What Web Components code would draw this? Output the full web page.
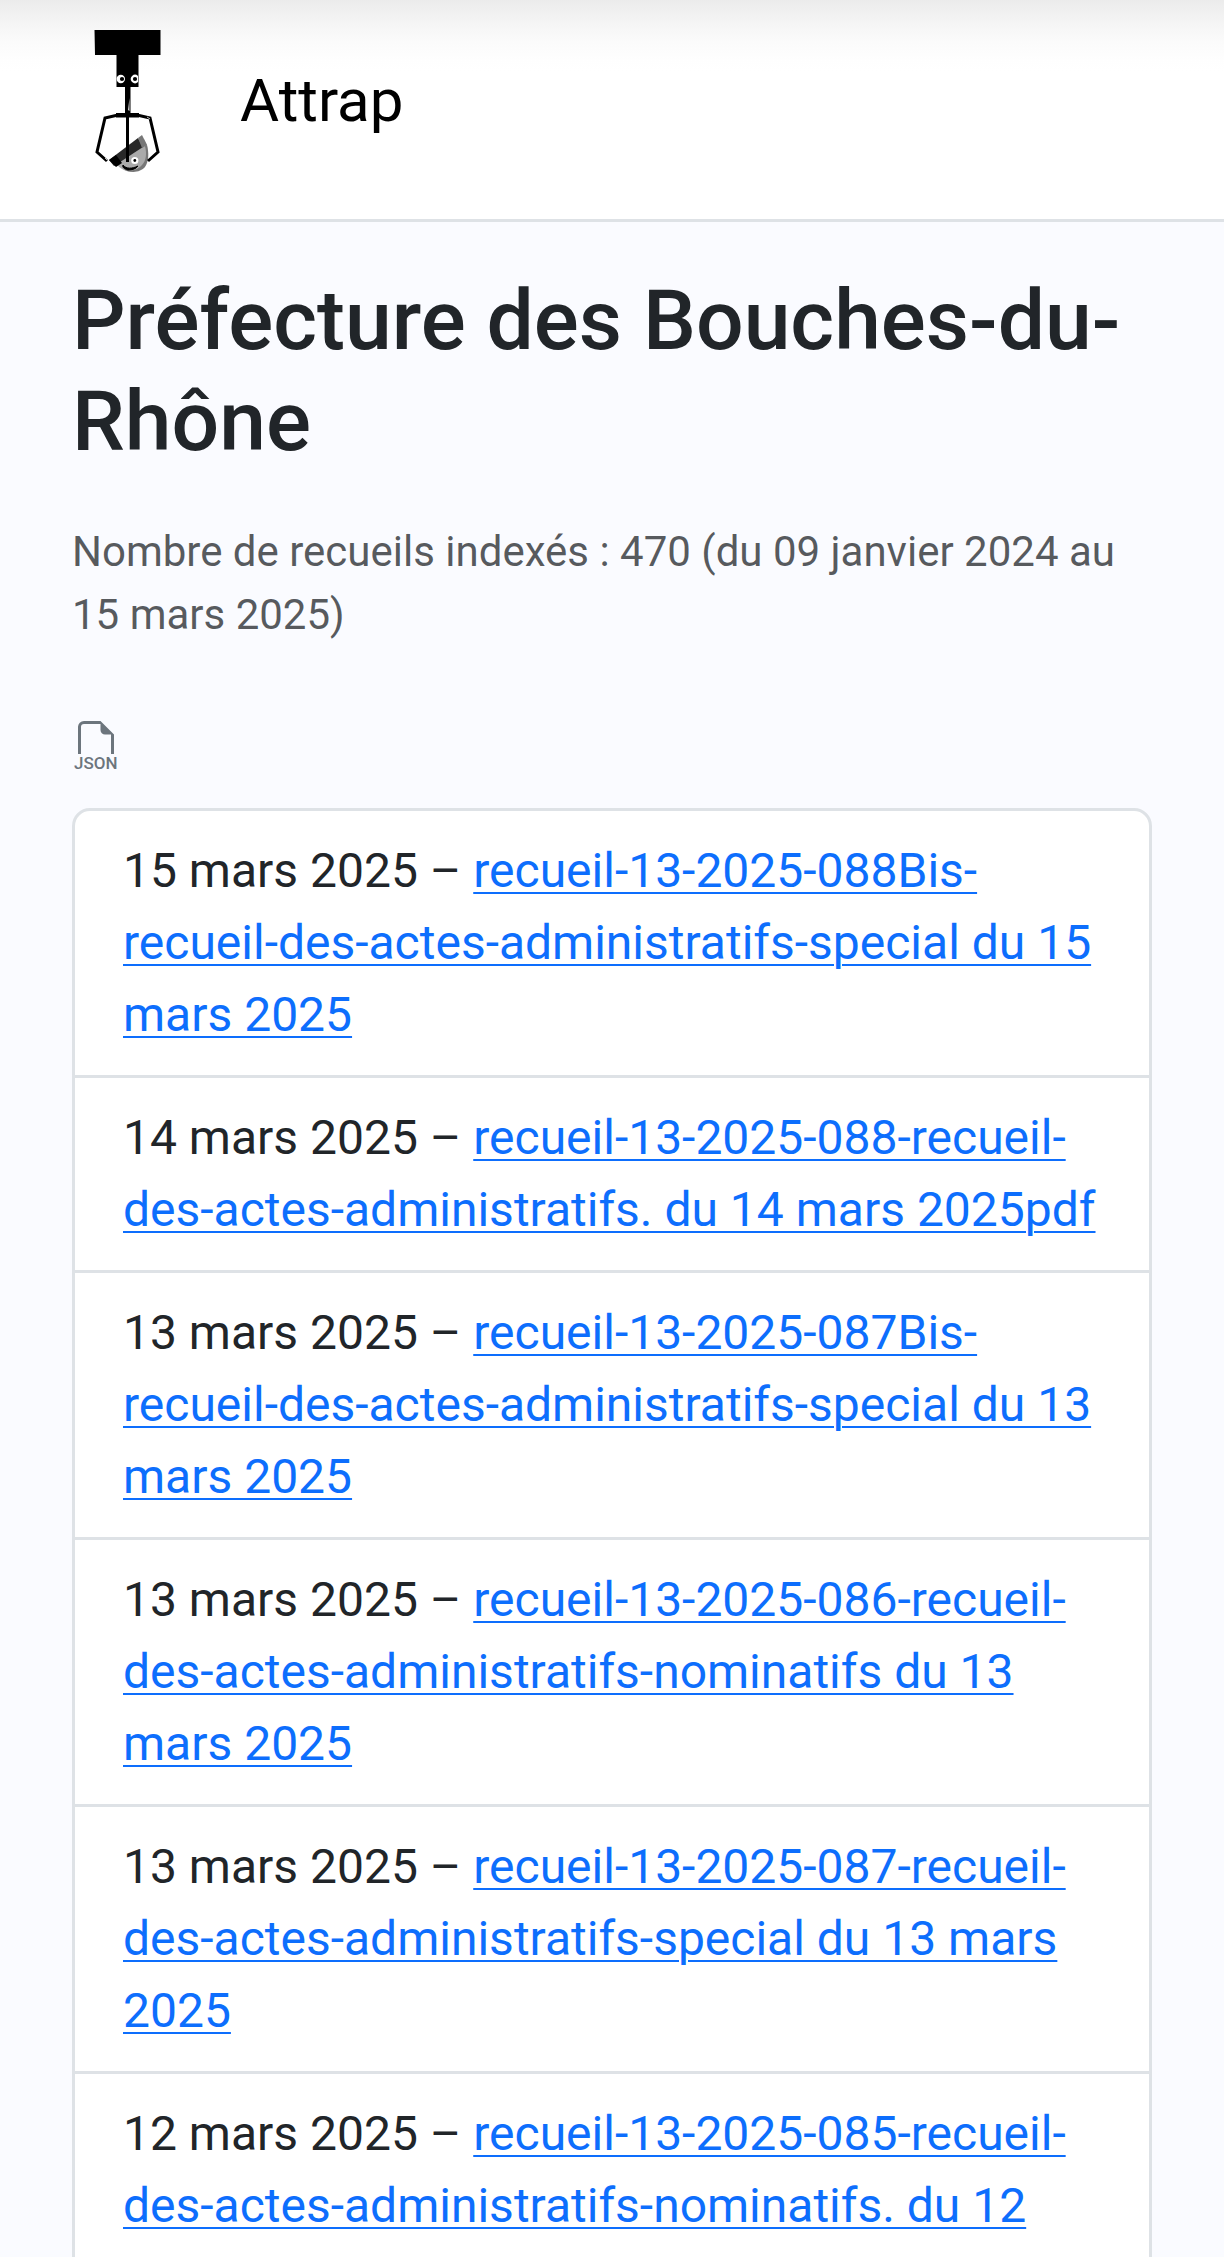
<!DOCTYPE html>
<html lang="fr">
<head>
<meta charset="utf-8">
<meta name="viewport" content="width=device-width, initial-scale=1">
<title>Attrap</title>
<style>
  html { overflow-x: hidden; }
  body { margin: 0; background: #fafbff; color: #212529; font-family: Roboto, "Liberation Sans", sans-serif; font-size: 48px; line-height: 72px; }
</style>
</head>
<body>
<template id="nav-tpl">
  <style>
    :host { display: block; border-bottom: 3px solid #dee2e6; background: linear-gradient(#ebebeb, #eeeeee 6px, #f5f5f5 24px, #fbfbfb 42px, #fefefe 60px, #fff 72px); }
    a { display: flex; align-items: center; gap: 72px; padding: 24px 72px 45px 90px; color: #000; text-decoration: none; font-size: 60px; line-height: 90px; }
    svg { display: block; width: 78px; height: 150px; }
    span { padding-top: 4px; }
  </style>
  <a href="#">
    <svg viewBox="90 24 78 150" aria-hidden="true">
      <path d="M94.500 30h66v25h-22v32h-22V55h-21.500z"/>
      <path d="M125 86h5.500v28h-5.500z"/>
      <path d="M129.500 98v13l-1.500-1z" fill="#ddd"/>
      <circle cx="120.800" cy="79" r="4.200" fill="#fff"/><circle cx="122" cy="79" r="2.100"/>
      <path d="M138 76a4.200 4.200 0 1 0 0 6z" fill="#fff"/><circle cx="135" cy="79" r="2.100"/>
      <path d="M114 160c5 10 14 13 22 11c9-3 13-12 11-26l-3-6z" fill="#aaa"/>
      <path d="M145 146c2 8 1 15-3 19c-4 5-11 7-19 4c8 5 18 3 22-2c4-6 4-14 2-22z" fill="#777"/>
      <path d="M109 160l29-22 5 9-29 19z" fill="#282828"/>
      <path d="M109 160l7-5 6 8-6 4z"/>
      <path d="M138 138l4-3 5 10-5 3z" fill="#777"/>
      <circle cx="134.800" cy="160.500" r="3.600" fill="#fff"/><circle cx="134.800" cy="160.500" r="1.400"/>
      <path d="M123 165c3 4 9 4 15 1c-2 3-6 4-10 4c-4-1-6-3-5-5z" stroke="#000"/>
      <path d="M127.500 113v49" fill="none" stroke="#000" stroke-width="3"/>
      <path d="M116 113h23v4.500h-23z"/>
      <path d="M118 115l-13 3-8 34 10 9M137 115l13 3 8 34-10 9" fill="none" stroke="#000" stroke-width="3"/>
      <path d="M147 117l3 2M105 158l2 2" stroke="#bbb" stroke-width="1"/>
    </svg>
    <span><slot></slot></span>
  </a>
</template>
<template id="heading-tpl">
  <style>
    :host { display: block; }
    h1 { margin: 0 0 48px; font-size: 84px; line-height: 101px; font-weight: 500; }
    p { margin: 0 0 72px; font-size: 42px; line-height: 63px; color: rgba(33, 37, 41, .75); }
  </style>
  <h1><slot name="title"></slot></h1>
  <p><slot></slot></p>
</template>
<template id="json-tpl">
  <style>
    :host { display: block; }
    a { display: block; width: 48px; color: #6c757d; }
    svg { display: block; width: 48px; height: 54px; }
    text { font: 500 17px Roboto, sans-serif; }
  </style>
  <a href="#" aria-label="JSON">
    <svg viewBox="0 0 48 54" fill="currentColor">
      <path transform="translate(0 3) scale(3)" d="M14 4.500V11h-1V4.500h-2A1.500 1.500 0 0 1 9.500 3V1H4a1 1 0 0 0-1 1v9H2V2a2 2 0 0 1 2-2h5.500z"/>
      <text x="2" y="51">JSON</text>
    </svg>
  </a>
</template>
<template id="list-tpl">
  <style>
    :host { display: block; border: 3px solid #dee2e6; border-radius: 18px; background: #fff; overflow: hidden; }
  </style>
  <slot></slot>
</template>
<template id="item-tpl">
  <style>
    :host { display: block; padding: 24px 48px; border-bottom: 3px solid #dee2e6; }
    :host(:last-of-type) { border-bottom: 0; }
    a { color: #0d6efd; text-decoration: underline; text-decoration-thickness: 2px; text-underline-offset: 5px; }
  </style>
  <slot name="date"></slot> – <a href="#"><slot></slot></a>
</template>
<template id="page-tpl">
  <style>
    :host { display: block; }
    main { padding: 48px 72px; }
    ::slotted(attrap-list) { margin-top: 36px; }
  </style>
  <slot name="nav"></slot>
  <main><slot></slot></main>
</template>

<attrap-page>
  <attrap-nav slot="nav">Attrap</attrap-nav>
  <attrap-heading><span slot="title">Préfecture des Bouches-du-Rhône</span>Nombre de recueils indexés : 470 (du 09 janvier 2024 au 15 mars 2025)</attrap-heading>
  <attrap-json></attrap-json>
  <attrap-list>
    <attrap-item><span slot="date">15 mars 2025</span>recueil-13-2025-088Bis-recueil-des-actes-administratifs-special du 15 mars 2025</attrap-item>
    <attrap-item><span slot="date">14 mars 2025</span>recueil-13-2025-088-recueil-des-actes-administratifs. du 14 mars 2025pdf</attrap-item>
    <attrap-item><span slot="date">13 mars 2025</span>recueil-13-2025-087Bis-recueil-des-actes-administratifs-special du 13 mars 2025</attrap-item>
    <attrap-item><span slot="date">13 mars 2025</span>recueil-13-2025-086-recueil-des-actes-administratifs-nominatifs du 13 mars 2025</attrap-item>
    <attrap-item><span slot="date">13 mars 2025</span>recueil-13-2025-087-recueil-des-actes-administratifs-special du 13 mars 2025</attrap-item>
    <attrap-item><span slot="date">12 mars 2025</span>recueil-13-2025-085-recueil-des-actes-administratifs-nominatifs. du 12 mars 2025</attrap-item>
  </attrap-list>
</attrap-page>
<script>
  class TemplateElement extends HTMLElement {
    constructor() {
      super();
      const tpl = document.getElementById(this.constructor.template);
      this.attachShadow({ mode: 'open' }).append(tpl.content.cloneNode(true));
    }
  }
  customElements.define('attrap-page', class extends TemplateElement { static template = 'page-tpl'; });
  customElements.define('attrap-nav', class extends TemplateElement { static template = 'nav-tpl'; });
  customElements.define('attrap-heading', class extends TemplateElement { static template = 'heading-tpl'; });
  customElements.define('attrap-json', class extends TemplateElement { static template = 'json-tpl'; });
  customElements.define('attrap-list', class extends TemplateElement { static template = 'list-tpl'; });
  customElements.define('attrap-item', class extends TemplateElement { static template = 'item-tpl'; });
</script>
</body>
</html>
